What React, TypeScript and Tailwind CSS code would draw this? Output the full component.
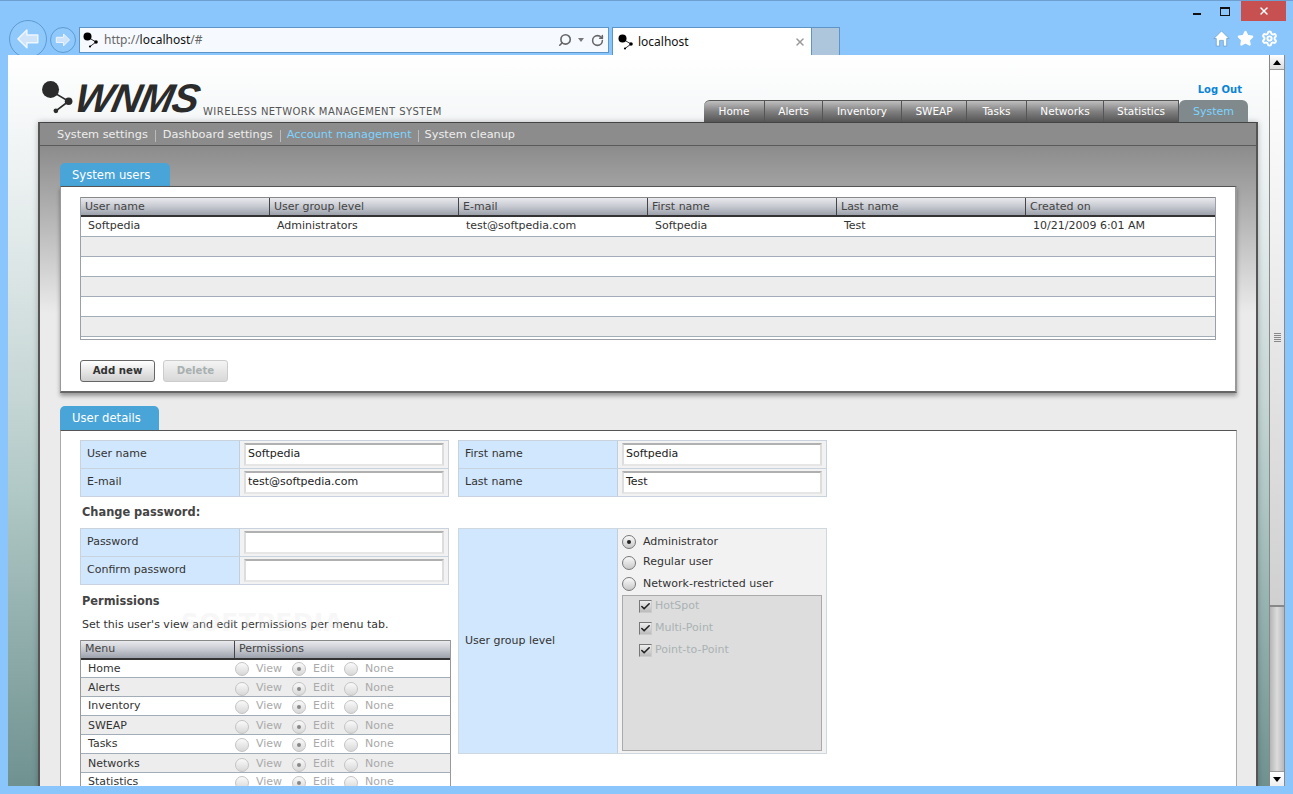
import { Check, RotateCw, Search, X, Star, Settings } from "lucide-react"

const navTabs = [
  { label: "Home", w: "w-[61px]" },
  { label: "Alerts", w: "w-[58px]" },
  { label: "Inventory", w: "w-[79px]" },
  { label: "SWEAP", w: "w-[65px]" },
  { label: "Tasks", w: "w-[60px]" },
  { label: "Networks", w: "w-[77px]" },
  { label: "Statistics", w: "w-[75px]" },
]

const userColumns = ["User name", "User group level", "E-mail", "First name", "Last name", "Created on"]
const userRow = ["Softpedia", "Administrators", "test@softpedia.com", "Softpedia", "Test", "10/21/2009 6:01 AM"]
const permissions = [
  { name: "Home", h: "h-[18px]", y: "pt-[2px]" },
  { name: "Alerts", h: "h-[19px]", y: "pt-[4px]" },
  { name: "Inventory", h: "h-[19px]", y: "pt-[2px]" },
  { name: "SWEAP", h: "h-[19px]", y: "pt-[4px]" },
  { name: "Tasks", h: "h-[19px]", y: "pt-[2px]" },
  { name: "Networks", h: "h-[19px]", y: "pt-[4px]" },
  { name: "Statistics", h: "h-[19px]", y: "pt-[2px]" },
]

function NodeIcon({ className }: { className?: string }) {
  return (
    <svg viewBox="0 0 32 32" className={className}>
      <path d="M9 10 L26 20 L14 29" fill="none" stroke="currentColor" strokeWidth="1.6" />
      <circle cx="9" cy="9" r="8" fill="currentColor" />
      <circle cx="26" cy="20" r="3.6" fill="currentColor" />
      <circle cx="14" cy="29" r="2.2" fill="currentColor" />
    </svg>
  )
}

function NavArrow({ size, right }: { size: string; right?: boolean }) {
  return (
    <div className={`${size} shrink-0 rounded-full border border-[#5f9bd0] bg-[#8fc8fb] flex items-center justify-center`}>
      <svg viewBox="0 0 24 24" className={`w-[66%] h-[66%] ${right ? "rotate-180" : ""}`}>
        <path d="M11 3 L2 12 L11 21 V16 H22 V8 H11 Z" fill="#cfe3f9" stroke="#eef6ff" strokeWidth="1.5" strokeLinejoin="round" />
      </svg>
    </div>
  )
}

function Radio({ on, disabled }: { on?: boolean; disabled?: boolean }) {
  return (
    <span
      className={`inline-flex w-[14px] h-[14px] shrink-0 rounded-full border items-center justify-center bg-gradient-to-b ${
        disabled ? "border-[#c4c4c4] from-[#fafafa] to-[#d8d8d8]" : "border-[#777] from-[#fafafa] to-[#c8c8c8]"
      }`}
    >
      {on && <span className={`w-[4px] h-[4px] rounded-full ${disabled ? "bg-[#888]" : "bg-[#222]"}`} />}
    </span>
  )
}

function Checkbox() {
  return (
    <span className="flex w-[13px] h-[13px] shrink-0 items-center justify-center border-t border-l border-[#777] border-r border-b border-r-[#ccc] border-b-[#ccc] bg-gradient-to-b from-[#eee] to-[#bbb]">
      <Check size={13} strokeWidth={3.5} className="text-[#222]" />
    </span>
  )
}

function GridHeader({ children, w, last }: { children: string; w: string; last?: boolean }) {
  return (
    <div
      className={`${w} h-full pl-[4px] pt-[1px] flex items-center text-[#444] bg-gradient-to-b from-[#e9eaee] via-[#c6c9d0] to-[#9ca1ab] ${
        last ? "" : "border-r border-r-[#444]"
      }`}
    >
      {children}
    </div>
  )
}

function Field({ label, value }: { label: string; value?: string }) {
  return (
    <div className="flex h-[28px] last:h-[27px] border-b border-[#c8d3dd] last:border-b-0">
      <div className="w-[159px] bg-[#d1e7fd] border-r border-[#c0cfde] pl-[6px] flex items-center text-[#333]">{label}</div>
      <div className="flex-1 bg-[#f2f2f2] flex items-center pl-[4px] pr-[4px]">
        <div className="w-[200px] h-[23px] bg-white border-2 border-t-[#b0b0b0] border-x-[#ddd] border-b-[#e6e6e6] pl-[2px] flex items-center text-[#222]">
          {value}
        </div>
      </div>
    </div>
  )
}

function FieldTable({ children }: { children: React.ReactNode }) {
  return <div className="w-[369px] border border-[#c8d3dd]">{children}</div>
}

export default function App() {
  return (
    <div className="w-[1293px] h-[794px] overflow-hidden flex flex-col bg-[#8ac5fb] border-t border-[#6f9fce] font-['DejaVu_Sans',sans-serif] text-[11px] text-[#333]">
      {/* window controls */}
      <div className="h-[20px] shrink-0 flex justify-end pr-[7px]">
        <div className="w-[18px] flex items-center justify-center pt-[5px] mr-[5px]">
          <div className="w-[8px] h-[2px] bg-[#111]" />
        </div>
        <div className="w-[22px] flex items-center justify-center mr-[2px] ml-[3px]">
          <div className="w-[10px] h-[9px] border border-t-2 border-[#111]" />
        </div>
        <div className="ml-[3px] w-[45px] bg-[#c75050] flex items-center justify-center">
          <X size={12} strokeWidth={3} className="text-white" />
        </div>
      </div>

      {/* toolbar */}
      <div className="h-[34px] shrink-0 flex pl-[9px]">
        <NavArrow size="w-[38px] h-[38px] -mt-[1px]" />
        <div className="pt-[6px] ml-[3px]">
          <NavArrow size="w-[26px] h-[26px]" right />
        </div>
        <div className="ml-[3px] mt-[6px] w-[530px] h-[26px] bg-[#f6faff] border border-[#5f95c6] flex items-center pl-[3px] pr-[4px] font-['Noto_Sans',sans-serif] text-[12px]">
          <NodeIcon className="w-[16px] h-[16px] text-black" />
          <span className="ml-[5px] text-[#666]">http://</span>
          <span className="text-[#111]">localhost</span>
          <span className="text-[#666]">/#</span>
          <div className="flex-1" />
          <Search size={14} strokeWidth={2.8} className="text-[#666] -scale-x-100" />
          <div className="ml-[6px] w-0 h-0 border-x-[3px] border-x-transparent border-t-[4px] border-t-[#777]" />
          <RotateCw size={13} strokeWidth={2.8} className="ml-[7px] text-[#666]" />
        </div>
        <div className="ml-[3px] mt-[6px] w-[200px] h-[28px] bg-white border border-b-0 border-[#5f95c6] flex items-center pl-[5px] pr-[5px] font-['Noto_Sans',sans-serif] text-[12px] text-[#111]">
          <NodeIcon className="w-[16px] h-[16px] text-black" />
          <span className="ml-[4px]">localhost</span>
          <div className="flex-1" />
          <X size={12} strokeWidth={3} className="text-[#999]" />
        </div>
        <div className="mt-[6px] w-[28px] h-[28px] bg-[#aec6dc] border-t border-r border-[#5f95c6]" />
        <div className="flex-1" />
        <div className="flex items-start pt-[9px] pr-[15px] gap-[7px] text-white">
          <svg viewBox="0 0 18 18" className="w-[17px] h-[17px]">
            <path d="M9 1 L17 9 H14.5 V17 H11 V11 H7 V17 H3.5 V9 H1 Z" fill="white" stroke="#5f95c6" strokeWidth="0.7" strokeLinejoin="round" />
          </svg>
          <Star size={17} fill="white" className="text-white" />
          <Settings size={17} strokeWidth={2.8} className="text-white" />
        </div>
      </div>

      {/* browser viewport */}
      <div className="relative h-[731px] shrink-0 mx-[8px] flex overflow-hidden">
        <div className="flex-1 min-w-0 overflow-hidden bg-[linear-gradient(to_bottom,#ffffff_0%,#eef2f3_15%,#c5d6d4_47%,#b0c8c6_60%,#6f9290_100%)]">
          {/* header */}
          <div className="h-[67px] flex pl-[33px] pr-[21px]">
            <div className="w-[500px] flex items-end pb-[6px]">
              <NodeIcon className="w-[34px] h-[34px] text-[#2b2b2b] mb-[2px]" />
              <span className="ml-[1px] w-[124px] inline-block -skew-x-[12deg] text-[40px] leading-[36px] h-[36px] italic font-bold tracking-[-1px] text-[#2b2b2b] font-['Liberation_Sans',sans-serif]">
                WNMS
              </span>
              <span className="ml-[3px] -mb-[2px] text-[#555] text-[10px] leading-[12px] tracking-[0.45px]">
                WIRELESS NETWORK MANAGEMENT SYSTEM
              </span>
            </div>
            <div className="flex-1 flex flex-col items-end justify-end">
              <div className="pr-[6px] pb-[3px] text-[10px] font-bold text-[#0a84d8]">Log Out</div>
              <div className="flex h-[22px]">
                {navTabs.map((t, i) => (
                  <div
                    key={t.label}
                    className={`${t.w} flex items-center justify-center text-white text-[10.5px] border-t border-r border-[#555] bg-gradient-to-b from-[#c0c0c0] via-[#808080] to-[#555] ${
                      i === 0 ? "rounded-tl-[6px]" : ""
                    }`}
                  >
                    {t.label}
                  </div>
                ))}
                <div className="w-[69px] flex items-center justify-center pt-[2px] text-[#7ed3ff] text-[11px] rounded-t-[6px] bg-[#808a8c]">System</div>
              </div>
            </div>
          </div>

          {/* main panel */}
          <div className="ml-[30px] w-[1220px] border-t border-x-2 border-t-[#444] border-x-[#555] shadow-[0_0_6px_rgba(0,0,0,0.25)] bg-[linear-gradient(to_bottom,#8c8c8c_0px,#8c8c8c_24px,#ebebeb_190px,#ebebeb_100%)] h-[700px]">
            <div className="h-[23px] bg-[#8c8c8c] border-b border-[#5a5a5a] pl-[17px] pt-[3px] flex items-center text-[11.3px] text-[#eeeeee]">
              <span>System settings</span>
              <span className="mx-[7px] w-px h-[12px] bg-[#bbb]" />
              <span>Dashboard settings</span>
              <span className="ml-[7px] mr-[6px] w-px h-[12px] bg-[#bbb]" />
              <span className="text-[#7ed3ff]">Account management</span>
              <span className="mx-[6px] w-px h-[12px] bg-[#bbb]" />
              <span>System cleanup</span>
            </div>

            <div className="pl-[20px] pr-[20px] pt-[17px]">
              {/* system users */}
              <div className="w-[110px] h-[23px] bg-[#49a5d8] rounded-t-[5px] flex items-center pl-[12px] pt-[2px] text-[11.6px] text-white">System users</div>
              <div className="w-[1177px] h-[207px] bg-white border-t border-[#555] border-r-2 border-b-2 border-l border-r-[#999] border-b-[#666] border-l-[#999] shadow-[0_3px_4px_rgba(0,0,0,0.35)] pt-[10px] pl-[19px]">
                <div className="w-[1136px] h-[143px] border-x border-b border-[#99a0a8] overflow-hidden">
                  <div className="flex h-[20px] border-t border-[#888] border-b-2 border-b-[#333]">
                    {userColumns.map((c, i) => (
                      <GridHeader key={c} w={i === 5 ? "flex-1" : "w-[189px]"} last={i === 5}>
                        {c}
                      </GridHeader>
                    ))}
                  </div>
                  {[0, 1, 2, 3, 4, 5].map((r) => (
                    <div key={r} className={`flex h-[20px] border-b border-[#a3adb8] ${r % 2 ? "bg-[#ededed]" : "bg-white"}`}>
                      {r === 0 &&
                        userRow.map((c, i) => (
                          <div key={i} className={`${i === 5 ? "flex-1" : "w-[189px]"} pl-[7px] flex items-center text-[#333]`}>
                            {c}
                          </div>
                        ))}
                    </div>
                  ))}
                </div>
                <div className="flex gap-[8px] mt-[20px]">
                  <div className="w-[75px] h-[22px] rounded-[3px] border border-[#666] bg-gradient-to-b from-white to-[#cfcfcf] flex items-center justify-center font-bold text-[10.2px] text-[#333]">
                    Add new
                  </div>
                  <div className="w-[65px] h-[22px] rounded-[3px] border border-[#ccc] bg-gradient-to-b from-[#f4f4f4] to-[#d8d8d8] flex items-center justify-center font-bold text-[10.2px] text-[#a8b0b0]">
                    Delete
                  </div>
                </div>
              </div>

              {/* user details */}
              <div className="mt-[13px] w-[99px] h-[24px] bg-[#49a5d8] rounded-t-[5px] flex items-center pl-[12px] pt-[2px] text-[11.6px] text-white">User details</div>
              <div className="relative w-[1177px] h-[400px] bg-white border-t border-[#555] border-x border-x-[#aaa] pt-[9px] pl-[19px]">
                <div className="flex gap-[9px]">
                  <FieldTable>
                    <Field label="User name" value="Softpedia" />
                    <Field label="E-mail" value="test@softpedia.com" />
                  </FieldTable>
                  <FieldTable>
                    <Field label="First name" value="Softpedia" />
                    <Field label="Last name" value="Test" />
                  </FieldTable>
                </div>

                <div className="flex gap-[9px] mt-[31px]">
                  <div className="w-[369px] shrink-0">
                    <div className="relative -mt-[24px] mb-[8px] h-[16px] pl-[2px] font-bold text-[#444] text-[11.4px]">Change password:</div>
                    <FieldTable>
                      <Field label="Password" />
                      <Field label="Confirm password" />
                    </FieldTable>
                    <div className="mt-[8px] pl-[2px] font-bold text-[#444] text-[11.4px]">Permissions</div>
                    <div className="mt-[7px] pl-[2px] text-[#333]">Set this user's view and edit permissions per menu tab.</div>
                    <div className="mt-[6px] w-[371px] border-x border-[#999]">
                      <div className="flex h-[20px] border-t border-[#888] border-b-2 border-b-[#333]">
                        <GridHeader w="w-[154px]">Menu</GridHeader>
                        <GridHeader w="flex-1" last>
                          Permissions
                        </GridHeader>
                      </div>
                      {permissions.map((p, i) => (
                        <div key={p.name} className={`${p.h} ${i % 2 ? "bg-[#ededed]" : "bg-white"} flex items-center border-b border-[#a3adb8] text-[#333]`}>
                          <div className={`w-[154px] pl-[7px] ${p.y}`}>{p.name}</div>
                          <div className={`flex items-center text-[#aaa] ${p.y}`}>
                            <Radio disabled />
                            <span className="ml-[7px] w-[36px]">View</span>
                            <Radio on disabled />
                            <span className="ml-[7px] w-[31px]">Edit</span>
                            <Radio disabled />
                            <span className="ml-[7px]">None</span>
                          </div>
                        </div>
                      ))}
                    </div>
                  </div>

                  <div className="w-[369px] h-[226px] flex border border-[#d0d8df] self-start">
                    <div className="w-[159px] bg-[#d1e7fd] border-r border-[#c0cfde] pl-[6px] flex items-center text-[#333]">User group level</div>
                    <div className="flex-1 bg-[#f2f2f2] pl-[4px] pr-[4px] text-[#333]">
                      <div className="flex items-center h-[22px] mt-[2px]">
                        <Radio on />
                        <span className="ml-[7px]">Administrator</span>
                      </div>
                      <div className="flex items-center h-[20px]">
                        <Radio />
                        <span className="ml-[7px] pb-[2px]">Regular user</span>
                      </div>
                      <div className="flex items-center h-[22px]">
                        <Radio />
                        <span className="ml-[7px]">Network-restricted user</span>
                      </div>
                      <div className="w-[200px] h-[156px] bg-[#dddddd] border border-[#aaa] pl-[16px] text-[#a9b3b3]">
                        <div className="-mt-[1px]">
                          {["HotSpot", "Multi-Point", "Point-to-Point"].map((c) => (
                            <div key={c} className="flex items-center h-[22px] gap-[3px]">
                              <Checkbox />
                              <span>{c}</span>
                            </div>
                          ))}
                        </div>
                      </div>
                    </div>
                  </div>
                </div>

                {/* watermark */}
                <div className="absolute left-[120px] top-[173px] text-[25px] font-bold tracking-[0.5px] text-[#e8e8e8] opacity-30 pointer-events-none">SOFTPEDIA</div>
              </div>
            </div>
          </div>
        </div>

        {/* scrollbar */}
        <div className="w-[16px] shrink-0 flex flex-col border-l border-[#888] border-r border-r-[#8a8a8a] bg-gradient-to-r from-[#b5b5b5] via-[#dcdcdc] to-[#b8b8b8]">
          <div className="h-[15px] bg-gradient-to-b from-white to-[#dcdcdc] border-b border-[#999] flex items-center justify-center">
            <div className="w-0 h-0 border-x-[4px] border-x-transparent border-b-[5px] border-b-black" />
          </div>
          <div className="h-[537px] bg-gradient-to-b from-white to-[#d0d0d0] border-b-2 border-[#888] flex flex-col items-center justify-center gap-[1px]">
            {[0, 1, 2, 3, 4].map((i) => (
              <div key={i} className="w-[7px] h-px bg-[#888]" />
            ))}
          </div>
          <div className="flex-1" />
          <div className="h-[15px] bg-gradient-to-b from-white to-[#eee] border-t border-[#999] flex items-center justify-center">
            <div className="w-0 h-0 border-x-[4px] border-x-transparent border-t-[5px] border-t-black" />
          </div>
        </div>
      </div>
    </div>
  )
}
